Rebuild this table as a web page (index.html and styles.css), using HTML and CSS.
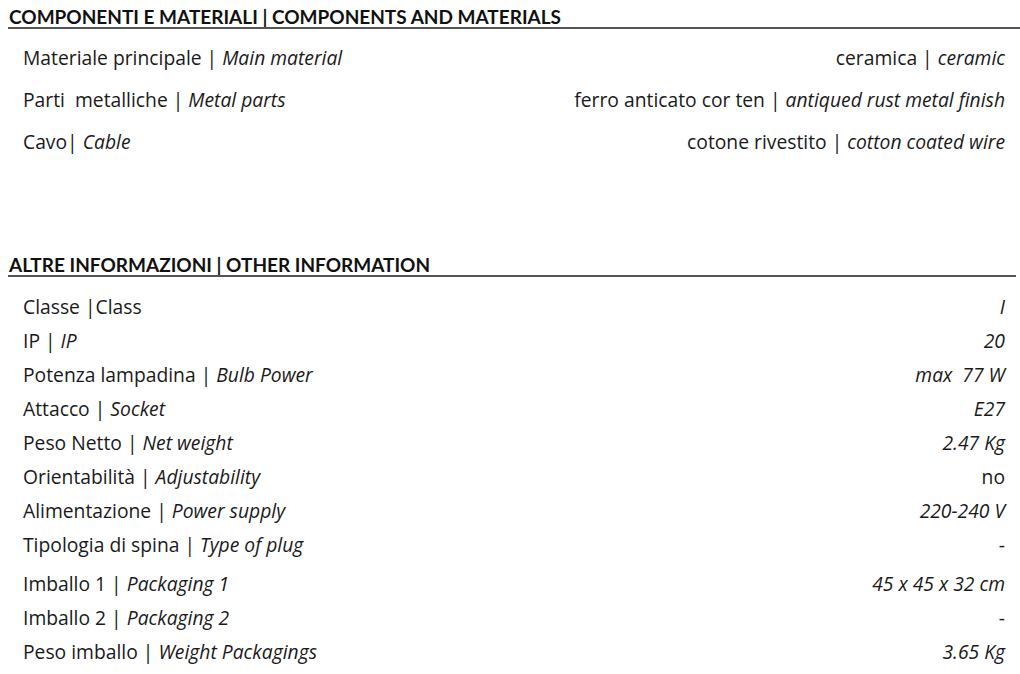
FILE: index.html
```html
<!DOCTYPE html>
<html lang="it">
<head>
<meta charset="utf-8">
<title>Componenti e materiali</title>
<link rel="stylesheet" href="styles.css">
</head>
<body>
<section class="sec sec-a">
  <h2 class="head head-a"><span>COMPONENTI E MATERIALI | COMPONENTS AND MATERIALS</span></h2>
  <div class="rows rows-a">
    <div class="row"><span class="k">Materiale principale | <i>Main material</i></span><span class="v">ceramica | <i>ceramic</i></span></div>
    <div class="row"><span class="k">Parti&nbsp; metalliche | <i>Metal parts</i></span><span class="v">ferro anticato cor ten | <i>antiqued rust metal finish</i></span></div>
    <div class="row"><span class="k">Cavo| <i>Cable</i></span><span class="v">cotone rivestito | <i>cotton coated wire</i></span></div>
  </div>
</section>
<section class="sec sec-b">
  <h2 class="head head-b"><span>ALTRE INFORMAZIONI | OTHER INFORMATION</span></h2>
  <div class="rows rows-b">
    <div class="row"><span class="k">Classe |Class</span><span class="v"><i>I</i></span></div>
    <div class="row"><span class="k">IP | <i>IP</i></span><span class="v"><i>20</i></span></div>
    <div class="row"><span class="k">Potenza lampadina | <i>Bulb Power</i></span><span class="v"><i>max&nbsp; 77 W</i></span></div>
    <div class="row"><span class="k">Attacco | <i>Socket</i></span><span class="v"><i>E27</i></span></div>
    <div class="row"><span class="k">Peso Netto | <i>Net weight</i></span><span class="v"><i>2.47 Kg</i></span></div>
    <div class="row"><span class="k">Orientabilità | <i>Adjustability</i></span><span class="v">no</span></div>
    <div class="row"><span class="k">Alimentazione | <i>Power supply</i></span><span class="v"><i>220-240 V</i></span></div>
    <div class="row"><span class="k">Tipologia di spina | <i>Type of plug</i></span><span class="v">-</span></div>
    <div class="row row-gap"><span class="k">Imballo 1 | <i>Packaging 1</i></span><span class="v"><i>45 x 45 x 32 cm</i></span></div>
    <div class="row"><span class="k">Imballo 2 | <i>Packaging 2</i></span><span class="v">-</span></div>
    <div class="row"><span class="k">Peso imballo | <i>Weight Packagings</i></span><span class="v"><i>3.65 Kg</i></span></div>
  </div>
</section>
</body>
</html>
```
FILE: styles.css
```css
html, body {
  margin: 0;
  padding: 0;
  background: #fff;
}
body {
  width: 1020px;
  height: 674px;
  overflow: hidden;
  font-family: "Open Sans", "Noto Sans", sans-serif;
  color: #1a1a1a;
}
.sec {
  display: flex;
  flex-direction: column;
}
.sec-a {
  padding-top: 7px;
}
.sec-b {
  padding-top: 101px;
}
.head {
  margin: 0;
  font-family: "Lato", "Liberation Sans", sans-serif;
  font-weight: 700;
  font-size: 19px;
  line-height: 20px;
  color: #111;
  border-bottom: 2px solid #555;
  margin-left: 8px;
  padding-left: 1px;
}
.head-b {
  margin-right: 4px;
}
.rows {
  display: flex;
  flex-direction: column;
  padding: 0 15px 0 23px;
  font-size: 19.3px;
}
.rows-a {
  padding-top: 17px;
  gap: 18px;
}
.rows-b {
  padding-top: 18px;
  gap: 10px;
}
.row {
  display: flex;
  justify-content: space-between;
  line-height: 24px;
}
.row-gap {
  margin-top: 5px;
}
.k, .v {
  white-space: nowrap;
}
```
